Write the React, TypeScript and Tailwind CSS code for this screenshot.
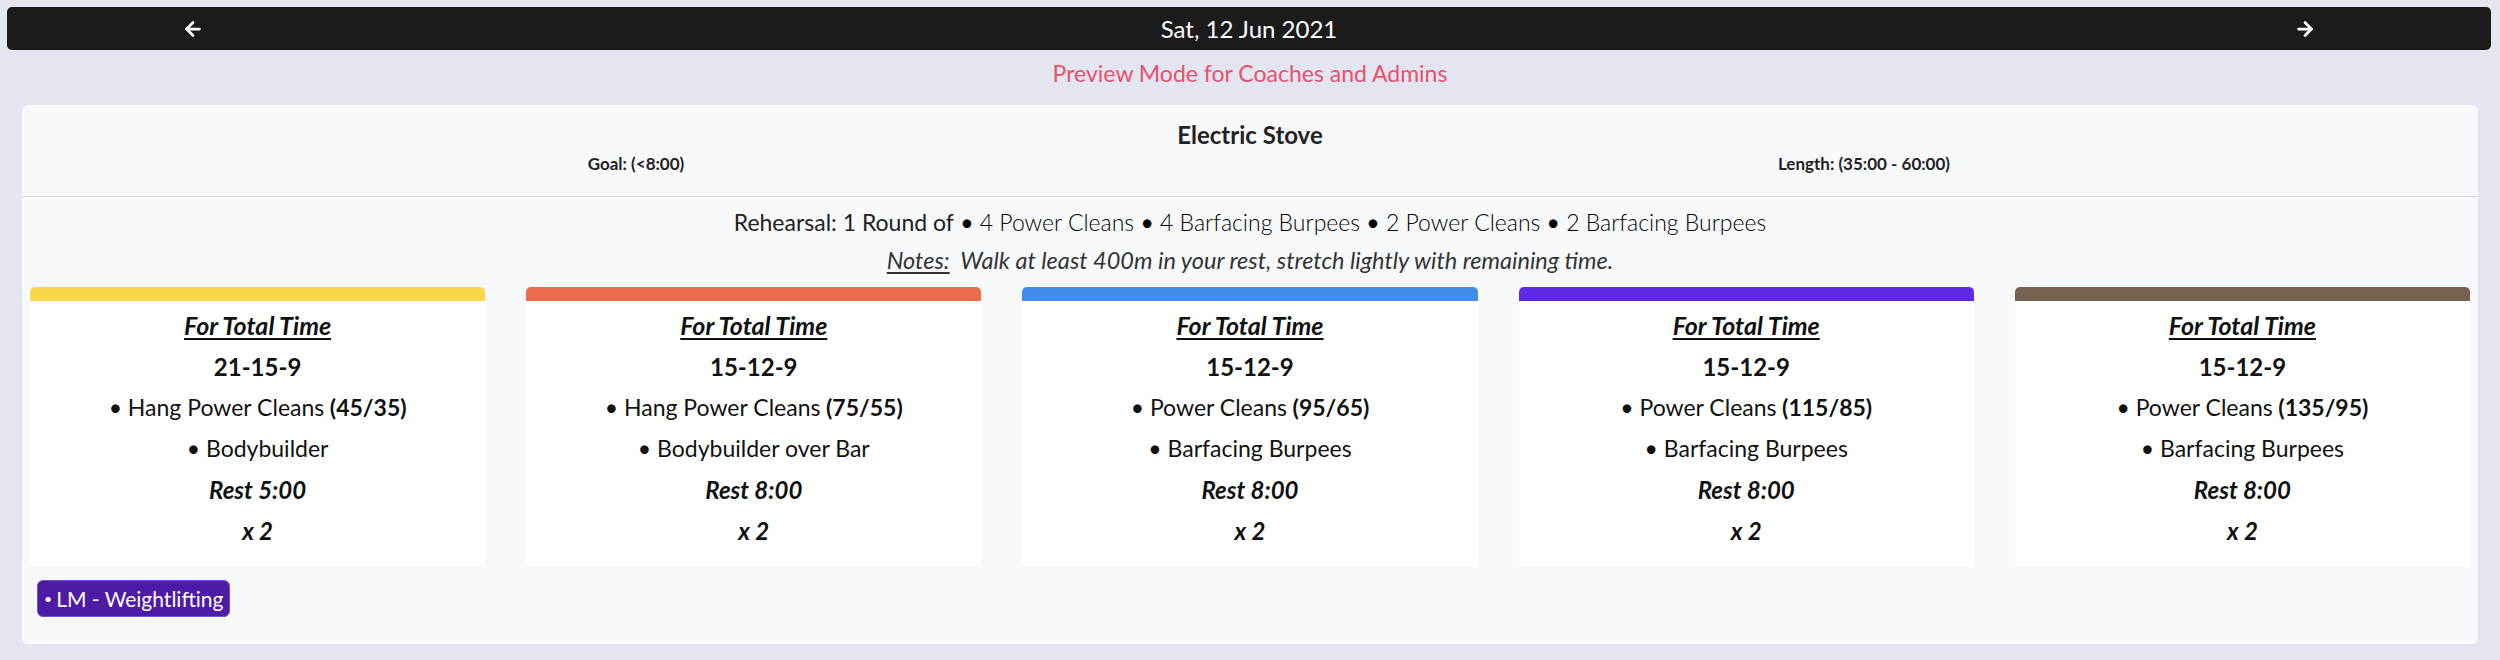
import { ArrowLeft, ArrowRight } from 'lucide-react'

type Movement = { name: string; load?: string }
type Workout = {
  color: string
  scheme: string
  movements: Movement[]
  rest: string
}

const workouts: Workout[] = [
  {
    color: 'bg-[#f9d64c]',
    scheme: '21-15-9',
    movements: [{ name: 'Hang Power Cleans', load: '(45/35)' }, { name: 'Bodybuilder' }],
    rest: 'Rest 5:00',
  },
  {
    color: 'bg-[#ec6c4e]',
    scheme: '15-12-9',
    movements: [{ name: 'Hang Power Cleans', load: '(75/55)' }, { name: 'Bodybuilder over Bar' }],
    rest: 'Rest 8:00',
  },
  {
    color: 'bg-[#418ded]',
    scheme: '15-12-9',
    movements: [{ name: 'Power Cleans', load: '(95/65)' }, { name: 'Barfacing Burpees' }],
    rest: 'Rest 8:00',
  },
  {
    color: 'bg-[#5e2ae7]',
    scheme: '15-12-9',
    movements: [{ name: 'Power Cleans', load: '(115/85)' }, { name: 'Barfacing Burpees' }],
    rest: 'Rest 8:00',
  },
  {
    color: 'bg-[#776150]',
    scheme: '15-12-9',
    movements: [{ name: 'Power Cleans', load: '(135/95)' }, { name: 'Barfacing Burpees' }],
    rest: 'Rest 8:00',
  },
]

const rehearsal = ['4 Power Cleans', '4 Barfacing Burpees', '2 Power Cleans', '2 Barfacing Burpees']

function WorkoutCard({ workout }: { workout: Workout }) {
  return (
    <div className="flex flex-col">
      <div className={`h-[14px] rounded-t-[5px] ${workout.color}`} />
      <div className="flex flex-col bg-white pt-[4px] pb-[15px] text-center text-[23px] leading-[41px] text-[#111]">
        <p className="text-[25px] font-bold italic underline underline-offset-[3px]">For Total Time</p>
        <p className="text-[24px] font-bold">{workout.scheme}</p>
        {workout.movements.map((m) => (
          <p key={m.name}>
            • {m.name}
            {m.load && <span className="font-bold"> {m.load}</span>}
          </p>
        ))}
        <p className="text-[24px] font-bold italic">{workout.rest}</p>
        <p className="text-[24px] font-bold italic">x 2</p>
      </div>
    </div>
  )
}

export default function App() {
  return (
    <div className="min-h-[660px] bg-[#e3e5f1] pt-[7px] font-['Lato',sans-serif]">
      {/* Date bar */}
      <div className="ml-[7px] mr-[9px] flex h-[43px] items-center justify-between rounded-[5px] bg-[#1b1b1b] px-[175px] text-white">
        <ArrowLeft size={22} strokeWidth={3} />
        <span className="text-[24px]">Sat, 12 Jun 2021</span>
        <ArrowRight size={22} strokeWidth={3} />
      </div>

      <p className="pt-[8px] text-center text-[23px] leading-[30px] text-[#e8526e]">
        Preview Mode for Coaches and Admins
      </p>

      <div className="mx-[22px] mt-[17px] rounded-[6px] bg-[#f8f9fb]">
        {/* Header */}
        <div className="border-b border-[#d4d6e2] pt-[15px] pb-[22px]">
          <h1 className="text-center text-[24px] font-bold leading-[30px] text-[#222]">Electric Stove</h1>
          <div className="mt-[4px] grid grid-cols-2 text-center text-[17px] font-bold leading-[20px] text-[#222]">
            <span>Goal: (&lt;8:00)</span>
            <span>Length: (35:00 - 60:00)</span>
          </div>
        </div>

        {/* Body */}
        <div className="px-2 pt-[6px] pb-[27px]">
          <p className="text-center text-[23px] leading-[38px] text-[#222]">
            Rehearsal: 1 Round of
            {rehearsal.map((r, i) => (
              <span key={i} className="font-light text-black">
                {' '}
                <span className="font-normal">•</span> {r}
              </span>
            ))}
          </p>
          <p className="text-center text-[23.5px] italic leading-[38px] text-[#333]">
            <span className="underline underline-offset-[3px]">Notes:</span>
            {'\u00a0\u00a0'}Walk at least 400m in your rest, stretch lightly with remaining time.
          </p>

          <div className="mt-[8px] grid grid-cols-5 gap-[41px]">
            {workouts.map((w, i) => (
              <WorkoutCard key={i} workout={w} />
            ))}
          </div>

          <div className="mt-[14px] flex">
            <span className="ml-[7px] flex h-[37px] items-center rounded-[6px] border border-[#7650c8] bg-[#4e1ba7] px-[6px] text-[21px] text-white">
              <span className="mr-[4px] text-[14px]">•</span>LM - Weightlifting
            </span>
          </div>
        </div>
      </div>
    </div>
  )
}
